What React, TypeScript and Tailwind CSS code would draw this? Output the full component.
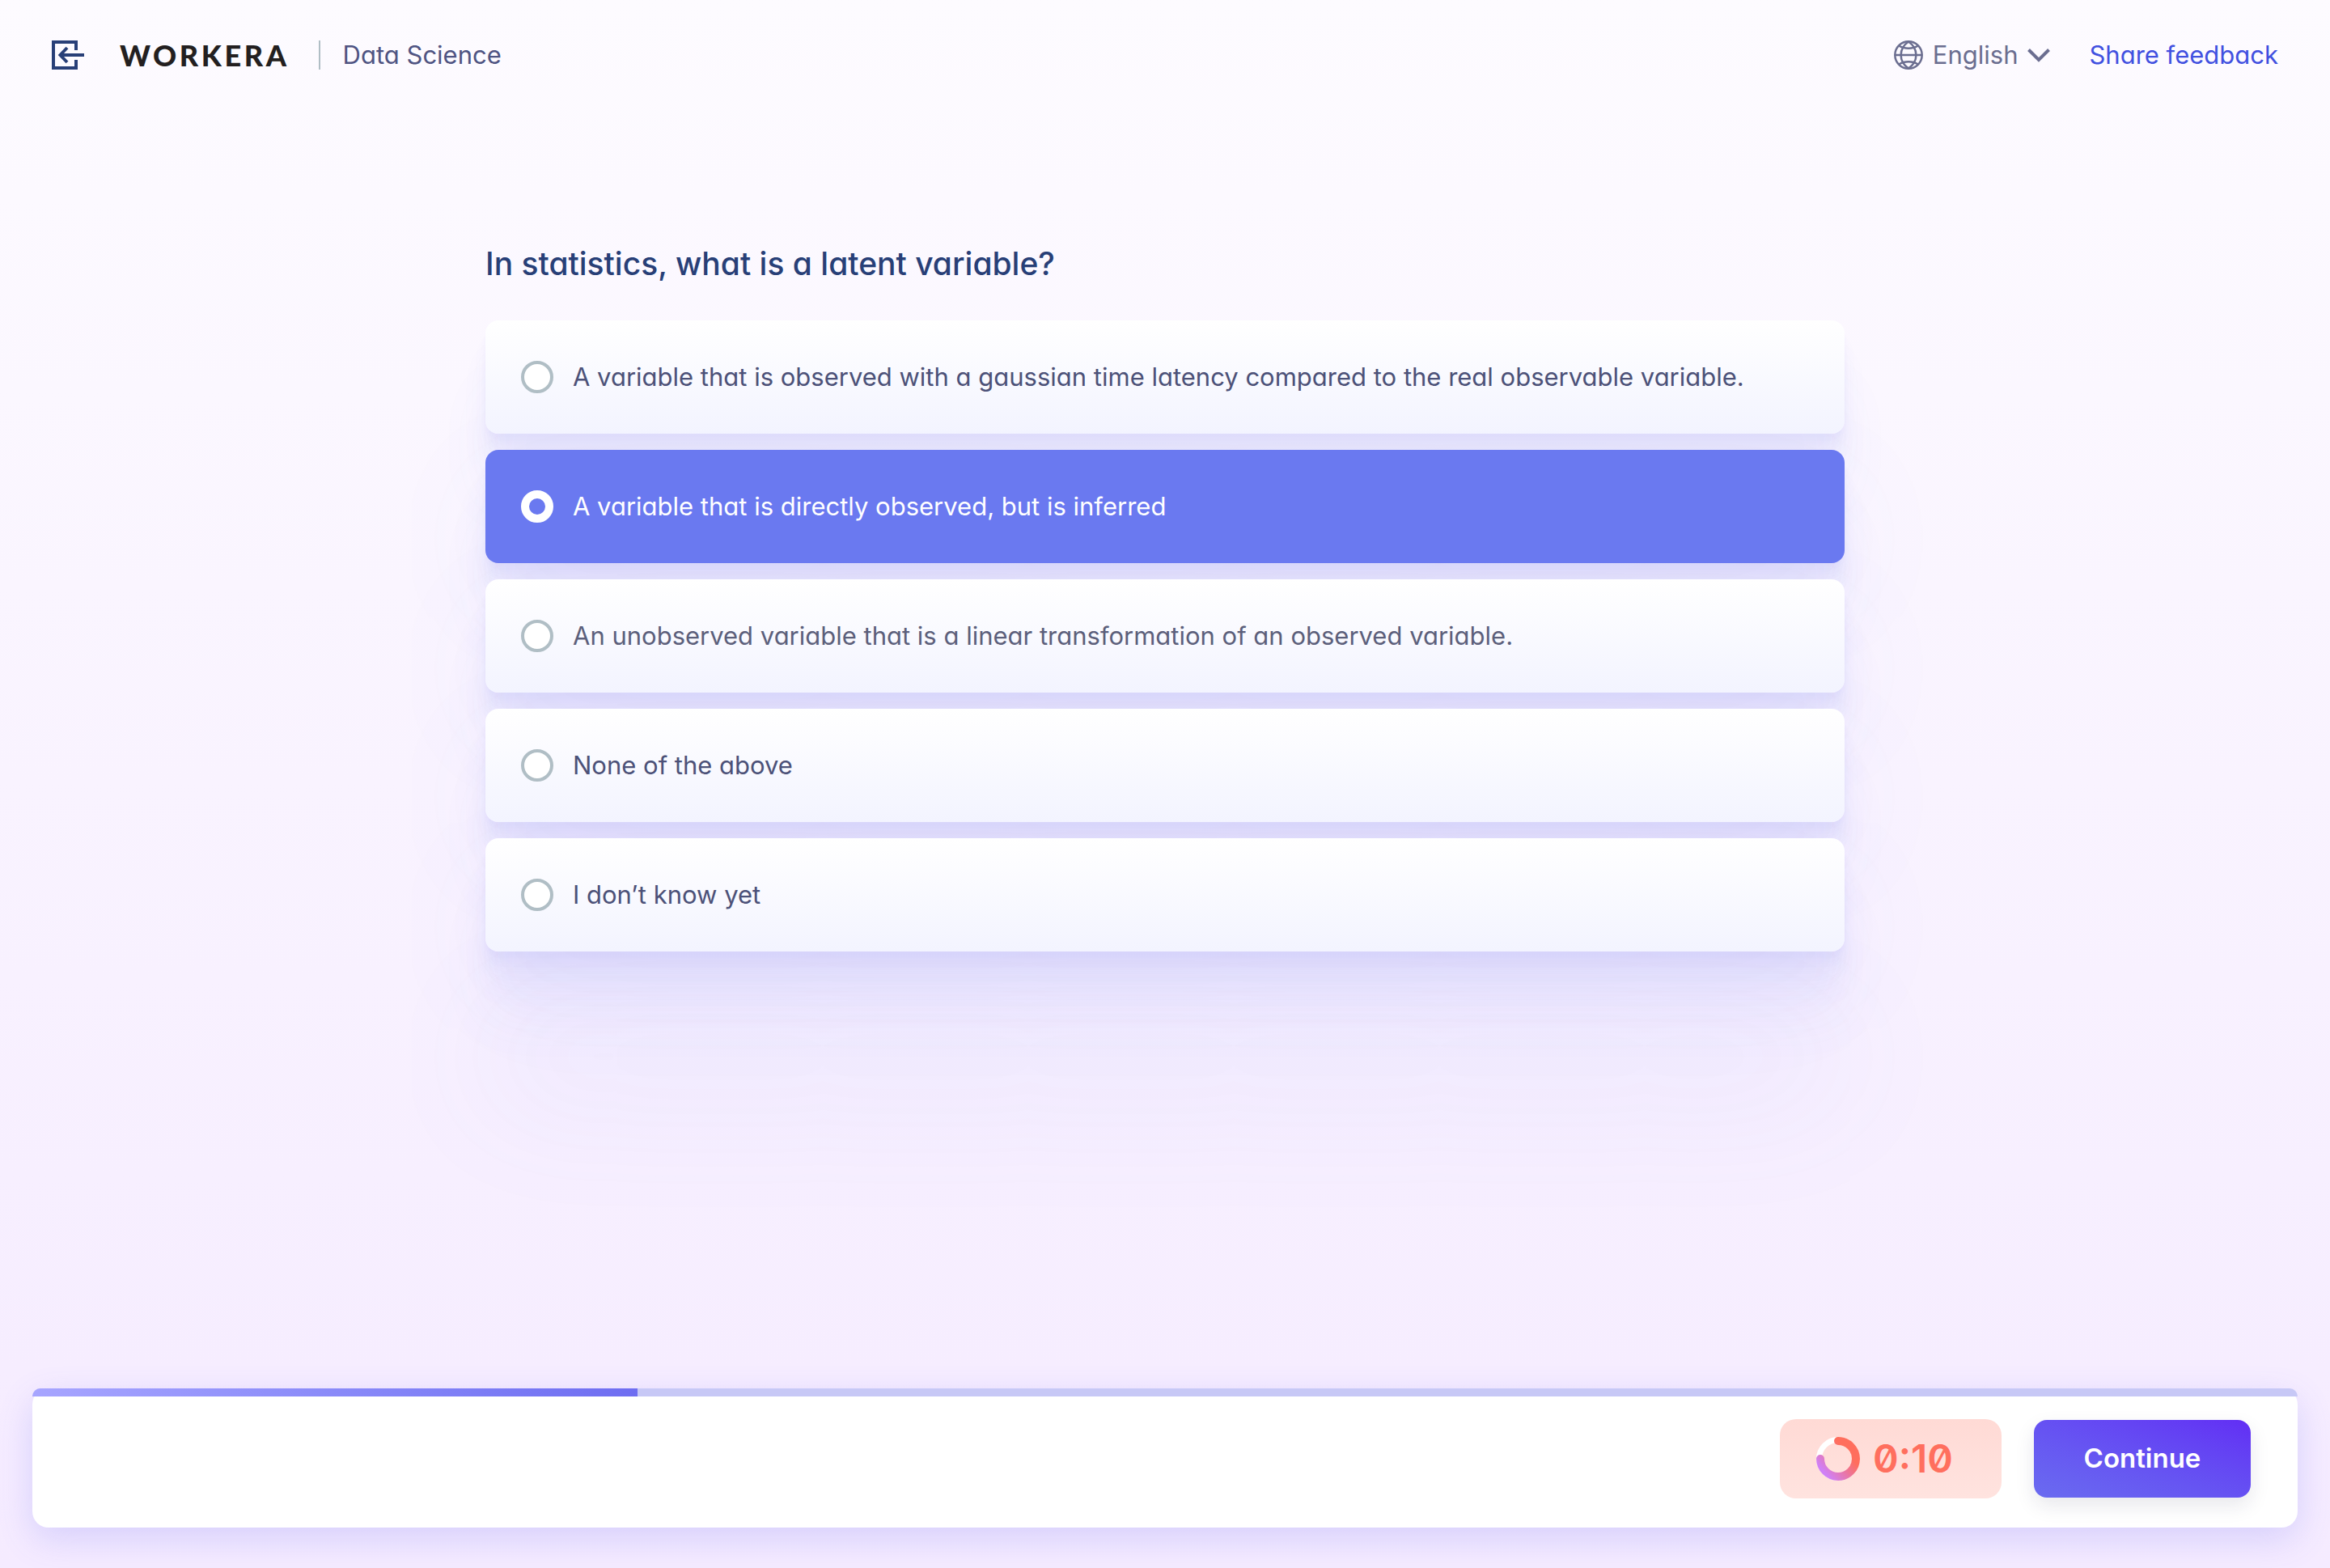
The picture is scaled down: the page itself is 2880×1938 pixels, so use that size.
import { useState } from "react";

const OPTIONS = [
  { text: "A variable that is observed with a gaussian time latency compared to the real observable variable." },
  { text: "A variable that is directly observed, but is inferred" },
  { text: "An unobserved variable that is a linear transformation of an observed variable.", muted: true },
  { text: "None of the above" },
  { text: "I don’t know yet" },
];

const PROGRESS = 26.7;

function ExitIcon() {
  return (
    <svg viewBox="0 0 40 36" className="h-9 w-10" fill="none" stroke="currentColor" strokeWidth="4" aria-hidden="true">
      <path d="M30 12V2H2v32h28V24" />
      <path d="M11 18h29" />
      <path d="M19 9l-8.500 9 8.500 9" />
    </svg>
  );
}

function GlobeIcon() {
  return (
    <svg viewBox="0 0 36 36" className="size-9" fill="none" stroke="currentColor" strokeWidth="2.500" aria-hidden="true">
      <circle cx="18" cy="18" r="16.700" />
      <path d="M1 18h34" />
      <path d="M18 1.500C5.500 10 5.500 26 18 34.500C30.500 26 30.500 10 18 1.500z" />
      <path d="M6 6.500c7 4.300 17 4.300 24 0" />
      <path d="M6 29.500c7-4.300 17-4.300 24 0" />
    </svg>
  );
}

function ChevronIcon() {
  return (
    <svg viewBox="0 0 28 17" className="h-[17px] w-7" fill="none" stroke="currentColor" strokeWidth="4" aria-hidden="true">
      <path d="M1.500 1.500L14 14L26.500 1.500" />
    </svg>
  );
}

function TimerRing() {
  return (
    <svg viewBox="0 0 54 54" className="size-[54px]" fill="none" aria-hidden="true">
      <defs>
        <linearGradient id="ring" x1="40" y1="22" x2="12" y2="46" gradientUnits="userSpaceOnUse">
          <stop offset="0" stopColor="#ff6e5d" />
          <stop offset="1" stopColor="#d080f6" />
        </linearGradient>
      </defs>
      <circle cx="27" cy="27" r="23.500" stroke="#fff" strokeWidth="7" />
      <path d="M27 5A22 22 0 1 1 5 27" stroke="url(#ring)" strokeWidth="10" strokeLinecap="round" />
    </svg>
  );
}

function Header() {
  return (
    <header className="flex items-center justify-between px-16 pt-12">
      <div className="flex items-center">
        <button type="button" aria-label="Exit" className="text-[#283f77]">
          <ExitIcon />
        </button>
        <span className="ml-11 font-['Lato'] text-[36px] leading-10 font-black tracking-widest text-[#231f20]">WORKERA</span>
        <span className="ml-9 h-9 w-0.5 bg-[#b0bec5]" />
        <span className="ml-7 text-[31px] leading-10 text-[#4f5482]">Data Science</span>
      </div>
      <div className="flex items-center gap-12">
        <label className="flex items-center gap-3 text-[#6b6e90]">
          <GlobeIcon />
          <select aria-label="Language" className="field-sizing-content appearance-none bg-transparent text-[31px] leading-10">
            <option>English</option>
          </select>
          <ChevronIcon />
        </label>
        <a href="#feedback" className="text-[31px] leading-10 text-[#4150e0]">
          Share feedback
        </a>
      </div>
    </header>
  );
}

type OptionProps = { text: string; muted?: boolean; selected: boolean; onSelect: () => void };

function Option({ text, muted, selected, onSelect }: OptionProps) {
  const tone = selected
    ? "bg-[#6a79f0] text-white"
    : muted
      ? "bg-linear-to-b from-white to-[#f3f4ff] text-[#5c5f7b]"
      : "bg-linear-to-b from-white to-[#f3f4ff] text-[#4c5178]";
  return (
    <label
      className={
        "flex min-h-[140px] cursor-pointer items-center gap-6 rounded-2xl px-11 py-6 text-[31px] leading-10 shadow-[0_200px_160px_rgba(100,116,236,0.06),0_84px_66px_rgba(100,116,236,0.05),0_44px_36px_rgba(100,116,236,0.042),0_24px_20px_rgba(100,116,236,0.035),0_14px_10px_rgba(100,116,236,0.028),0_6px_4px_rgba(100,116,236,0.02)] " +
        tone
      }
    >
      <input
        type="radio"
        name="answer"
        checked={selected}
        onChange={onSelect}
        className="size-10 shrink-0 appearance-none rounded-full border-4 border-[#b0bec5] bg-white checked:border-10 checked:border-white checked:bg-[#6a79f0]"
      />
      <span>{text}</span>
    </label>
  );
}

function Footer() {
  return (
    <footer className="mx-10 mb-[50px] rounded-[20px] bg-white shadow-[0_14px_44px_rgba(90,96,240,0.2)]">
      <div
        role="progressbar"
        aria-label="Assessment progress"
        aria-valuenow={PROGRESS}
        className="h-2.5 overflow-hidden rounded-t-[10px] bg-[#c7c8f6]"
      >
        <div className="h-full bg-linear-to-r from-[#a7a5ff] to-[#6e6df1]" style={{ width: `${PROGRESS}%` }} />
      </div>
      <div className="flex items-center justify-end gap-10 pt-7 pr-[58px] pb-9">
        <div className="flex h-[98px] w-[274px] items-center gap-4 rounded-[20px] bg-linear-to-b from-[#ffdad5] to-[#ffe3df] pl-[45px]">
          <TimerRing />
          <span className="text-[48px] leading-none font-semibold text-[#ff6f5e] slashed-zero">0:10</span>
        </div>
        <button
          type="button"
          className="h-24 w-[268px] rounded-2xl bg-linear-to-tr from-[#6a6bf0] to-[#622df4] text-[33px] font-semibold text-white shadow-[0_10px_24px_rgba(30,30,70,0.1)]"
        >
          Continue
        </button>
      </div>
    </footer>
  );
}

export default function App() {
  const [answer, setAnswer] = useState(1);
  return (
    <div className="flex min-h-screen flex-col bg-linear-to-b from-[#fdfbff] to-[#f5ebff] font-['Inter',sans-serif] [font-feature-settings:'cv11']">
      <Header />
      <main className="flex-1 px-16 pt-[212px]">
        <fieldset className="mx-auto max-w-[1680px]">
          <legend className="pb-11 text-[39px] leading-[52px] font-medium text-[#283f77]">
            In statistics, what is a latent variable?
          </legend>
          <div className="flex flex-col gap-5">
            {OPTIONS.map(({ text, muted }, i) => (
              <Option key={text} text={text} muted={muted} selected={answer === i} onSelect={() => setAnswer(i)} />
            ))}
          </div>
        </fieldset>
      </main>
      <Footer />
    </div>
  );
}
